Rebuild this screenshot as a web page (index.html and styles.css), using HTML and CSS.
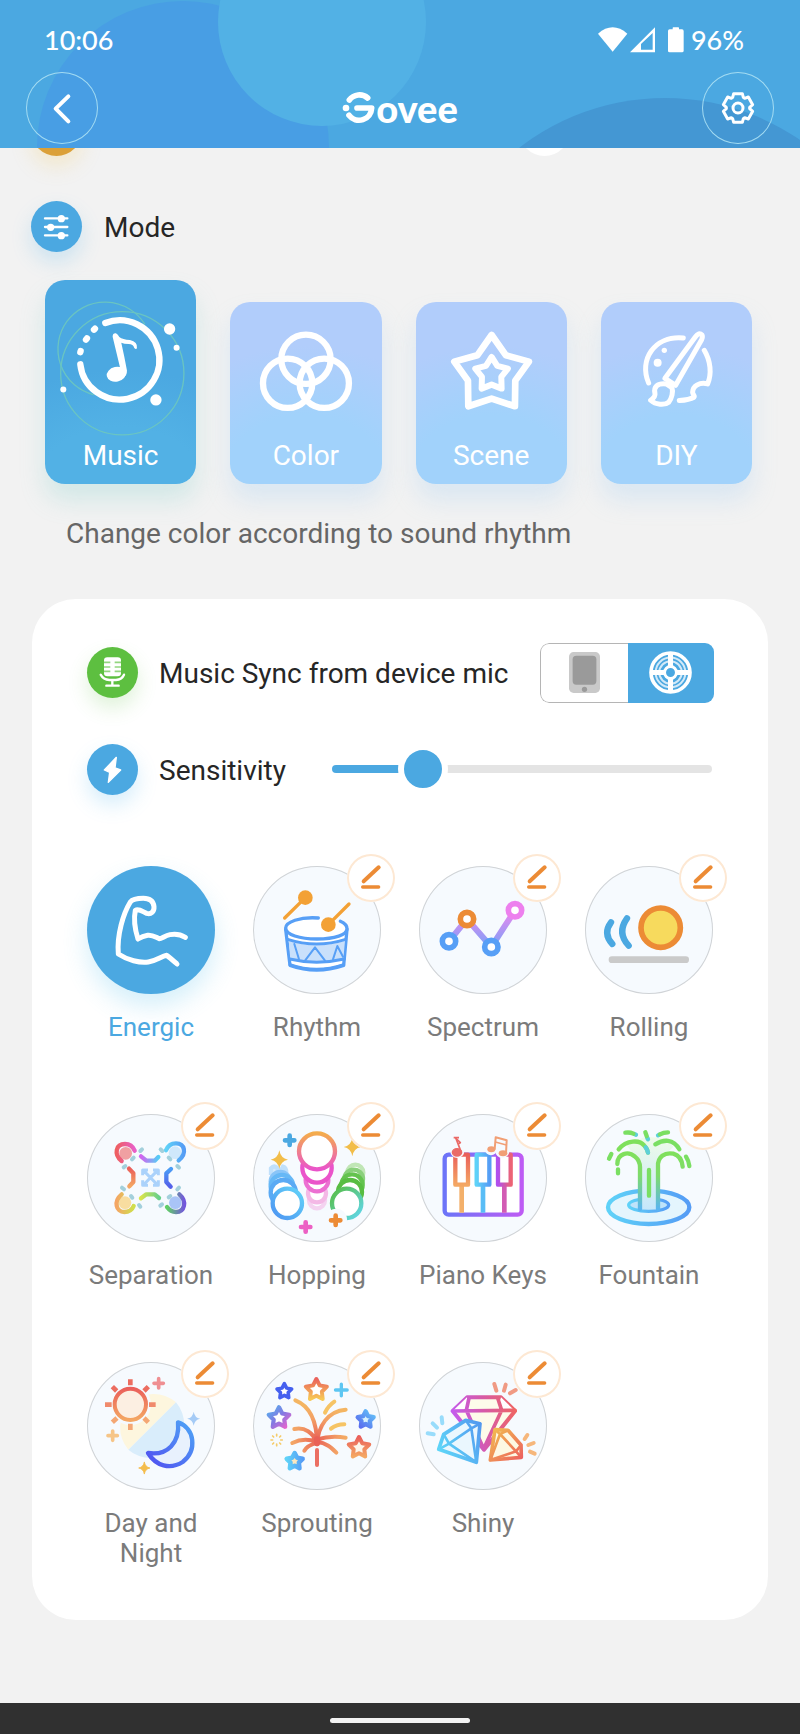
FILE: index.html
```html
<!DOCTYPE html>
<html lang="en">
<head>
<meta charset="utf-8">
<meta name="viewport" content="width=device-width, initial-scale=1">
<title>Govee</title>
<link rel="stylesheet" href="styles.css">
</head>
<body>
<svg class="defs" width="0" height="0" aria-hidden="true">
  <defs>
    <symbol id="edit" viewBox="833 42 144 144">
      <path d="M883 124L928 82" stroke="#ec8b35" stroke-width="12" stroke-linecap="round"/>
      <path d="M880 141H928" stroke="#ec8b35" stroke-width="10" stroke-linecap="round"/>
    </symbol>
    <path id="star" d="M0-50L15-21L48-15L25 8L29 41L0 26L-29 41L-25 8L-48-15L-15-21Z"/>
    <path id="spark" d="M0-28Q4-4 26 0Q4 4 0 28Q-4 4-26 0Q-4-4 0-28Z"/>
    <path id="plus" d="M0-14V14M-14 0H14"/>
    <linearGradient id="g-line" x1="0" y1="0" x2="0" y2="1"><stop offset="0" stop-color="#ee86ee"/><stop offset="1" stop-color="#7aa2f8"/></linearGradient>
    <linearGradient id="g-red-pink"><stop offset="0" stop-color="#ee5f62"/><stop offset="1" stop-color="#e85fc8"/></linearGradient>
    <linearGradient id="g-cyan-blue"><stop offset="0" stop-color="#5fd2f8"/><stop offset="1" stop-color="#559cf5"/></linearGradient>
    <linearGradient id="g-orange-lime"><stop offset="0" stop-color="#f4a664"/><stop offset="1" stop-color="#d0df4c"/></linearGradient>
    <linearGradient id="g-green-violet"><stop offset="0" stop-color="#60cf65"/><stop offset="1" stop-color="#7357dc"/></linearGradient>
    <linearGradient id="g-violet-cyan"><stop offset="0" stop-color="#d264ef"/><stop offset="1" stop-color="#55cdf6"/></linearGradient>
    <linearGradient id="g-red-orange-v" x1="0" y1="0" x2="0" y2="1"><stop offset="0" stop-color="#ea605b"/><stop offset="1" stop-color="#f4a763"/></linearGradient>
    <linearGradient id="g-blue-v" x1="0" y1="0" x2="0" y2="1"><stop offset="0" stop-color="#4a9df6"/><stop offset="1" stop-color="#5560e9"/></linearGradient>
    <linearGradient id="g-lime-green"><stop offset="0" stop-color="#d8e34b"/><stop offset="1" stop-color="#67d18b"/></linearGradient>
    <linearGradient id="g-orange-pink-v" x1="0" y1="0" x2="0" y2="1"><stop offset="0" stop-color="#f4ac4c"/><stop offset="1" stop-color="#ea54ca"/></linearGradient>
    <linearGradient id="g-cyan-blue-d" x1="1" y1="0" x2="0" y2="1"><stop offset="0" stop-color="#62d3f8"/><stop offset="1" stop-color="#4d94f2"/></linearGradient>
    <linearGradient id="g-star-blue" x1="1" y1="0" x2="0" y2="1"><stop offset="0" stop-color="#62c3f8"/><stop offset="1" stop-color="#5a68ee"/></linearGradient>
    <linearGradient id="g-green-cyan" x1="0" y1="0" x2="1" y2="1"><stop offset="0" stop-color="#58bd42"/><stop offset="1" stop-color="#5fd7ee"/></linearGradient>
    <linearGradient id="g-purple"><stop offset="0" stop-color="#6c74f8"/><stop offset="1" stop-color="#bd5cf4"/></linearGradient>
    <linearGradient id="g-purple-red"><stop offset="0" stop-color="#b04fee"/><stop offset="1" stop-color="#ec6375"/></linearGradient>
    <linearGradient id="g-fountain" x1="0" y1="0" x2="0" y2="1"><stop offset="0" stop-color="#7fe05c"/><stop offset=".4" stop-color="#7fdb6b"/><stop offset="1" stop-color="#59b5f0"/></linearGradient>
    <linearGradient id="g-water" x1="0" y1="0" x2="0" y2="1"><stop offset="0" stop-color="#effbe8"/><stop offset="1" stop-color="#c5e7fb"/></linearGradient>
    <linearGradient id="g-moon" x1="0" y1="1" x2="1" y2="0"><stop offset="0" stop-color="#504ff0"/><stop offset="1" stop-color="#4ea4f6"/></linearGradient>
    <linearGradient id="g-star-violet" x1="0" y1="0" x2="1" y2="1"><stop offset="0" stop-color="#55b1ed"/><stop offset=".5" stop-color="#8379e2"/><stop offset="1" stop-color="#f064cc"/></linearGradient>
    <linearGradient id="g-red-yellow-v" x1="0" y1="0" x2="0" y2="1"><stop offset="0" stop-color="#ea625c"/><stop offset="1" stop-color="#f7c956"/></linearGradient>
    <radialGradient id="g-burst" gradientUnits="userSpaceOnUse" cx="742" cy="302" r="110"><stop offset="0" stop-color="#e96157"/><stop offset=".6" stop-color="#f3a165"/><stop offset="1" stop-color="#f4b562"/></radialGradient>
    <linearGradient id="g-gem" gradientUnits="userSpaceOnUse" x1="155" y1="230" x2="350" y2="200"><stop offset="0" stop-color="#c45bf0"/><stop offset=".5" stop-color="#d65aa8"/><stop offset="1" stop-color="#f06560"/></linearGradient>
    <linearGradient id="g-gem-small" gradientUnits="userSpaceOnUse" x1="275" y1="270" x2="365" y2="360"><stop offset="0" stop-color="#f2bd4f"/><stop offset="1" stop-color="#ec615f"/></linearGradient>
    <linearGradient id="g-gem-blue" gradientUnits="userSpaceOnUse" x1="115" y1="330" x2="245" y2="260"><stop offset="0" stop-color="#5fd6f8"/><stop offset="1" stop-color="#5299ef"/></linearGradient>
  </defs>
</svg>

<header class="header">
  <svg class="header-art" viewBox="0 0 800 148" preserveAspectRatio="xMidYMin slice" aria-hidden="true">
    <circle cx="183" cy="147" r="146" fill="#489ee4"/>
    <circle cx="322" cy="22" r="104" fill="#52b1e5"/>
    <circle cx="665" cy="336" r="238" fill="#4497d3"/>
  </svg>
  <div class="status">
    <time class="clock">10:06</time>
    <div class="signals">
      <svg class="signal-icons" viewBox="594 80 264 84" fill="#fff" aria-hidden="true">
        <path d="M597 103Q641 65 685 103L641 157Z"/>
        <path fill-rule="evenodd" d="M693 159L768 84V159ZM726 134V151H761V101Z"/>
        <rect x="807" y="90" width="47" height="69" rx="5"/><rect x="821" y="84" width="19" height="10" rx="2"/>
      </svg>
      <span>96%</span>
    </div>
  </div>
  <div class="toolbar">
    <button class="round-button" type="button" aria-label="Back">
      <svg viewBox="76 216 216 216" fill="none" stroke="#fff" stroke-width="12" stroke-linecap="round" stroke-linejoin="round"><path d="M203 289L165 326L203 364"/></svg>
    </button>
    <h1 class="logo" aria-label="Govee">
      <svg class="logo-mark" viewBox="1024 272 102 102" fill="none" stroke="#fff" stroke-width="17" stroke-linecap="round" aria-hidden="true">
        <path d="M1046 299A38 38 0 0 1 1101 293M1045 345A38 38 0 0 0 1113 323H1069" stroke-linejoin="round"/><circle cx="1036" cy="323" r="10" fill="#fff" stroke="none"/>
      </svg>
      <span>ovee</span>
    </h1>
    <button class="round-button" type="button" aria-label="Settings">
      <svg viewBox="-108 -108 216 216" fill="none" stroke="#fff" stroke-width="9" stroke-linejoin="round"><path d="M-13-43H13L16-32L20-29L31-33L44-10L35-2V2L44 10L31 33L20 29L16 32L13 43H-13L-16 32L-20 29L-31 33L-44 10L-35 2V-2L-44-10L-31-33L-20-29L-16-32Z"/><circle r="15"/></svg>
    </button>
  </div>
</header>

<main class="main">
  <div class="scrolled-row" aria-hidden="true"><span class="dot dot-amber"></span><span class="dot dot-white"></span></div>

  <h2 class="mode-title">
    <span class="badge badge-blue">
      <svg viewBox="94 602 153 153" stroke="#fff" stroke-width="7" stroke-linecap="round" fill="#fff" aria-hidden="true"><path d="M136 654H203M136 680H203M136 705H203"/><g stroke="none"><circle cx="185" cy="655" r="11"/><circle cx="153" cy="681" r="11"/><circle cx="185" cy="706" r="11"/></g></svg>
    </span>
    <span class="label">Mode</span>
  </h2>

  <div class="tabs">
    <button class="tab tab-active" type="button" aria-pressed="true">
      <svg viewBox="77 58 454 477" fill="none" stroke-linecap="round" aria-hidden="true">
        <g stroke="#6fc9bd" stroke-width="4" opacity=".85"><path d="M376 190A141 141 0 1 0 222 402"/><circle cx="309" cy="338" r="185"/></g>
        <path d="M258 187A119 119 0 1 1 183 311" stroke="#fff" stroke-width="19"/>
        <path d="M224 207L227 204M200 237L203 233M183 275L184 271" stroke="#fff" stroke-width="19"/>
        <g fill="#fff"><circle cx="451" cy="205" r="17"/><circle cx="472" cy="261" r="9"/><circle cx="132" cy="387" r="9"/><circle cx="410" cy="418" r="17"/>
        <ellipse cx="291" cy="341" rx="29" ry="22" transform="rotate(-12 291 341)"/>
        <path d="M280 228Q280 217 290 218Q296 222 300 229Q310 237 332 238Q356 243 353 263Q350 268 345 262Q342 250 328 250Q314 250 306 246Q316 290 323 330Q324 348 308 354L302 320Z"/></g>
      </svg>
      <span>Music</span>
    </button>
    <button class="tab" type="button" aria-pressed="false">
      <svg viewBox="631 123 454 411" fill="none" stroke="#fff" stroke-width="19" aria-hidden="true"><circle cx="859" cy="295" r="74"/><circle cx="804" cy="367" r="74"/><circle cx="914" cy="367" r="74"/></svg>
      <span>Color</span>
    </button>
    <button class="tab" type="button" aria-pressed="false">
      <svg viewBox="47 123 454 411" fill="none" stroke="#fff" stroke-width="20" stroke-linejoin="round" aria-hidden="true"><path d="M274 222L317 283L386 302L345 359L344 436L274 413L204 436L203 359L162 302L231 283Z"/><path stroke-width="18" d="M274 288L291 315L323 323L303 348L304 383L274 371L244 383L245 348L225 323L257 315Z"/></svg>
      <span>Scene</span>
    </button>
    <button class="tab" type="button" aria-pressed="false">
      <svg viewBox="601 123 454 411" fill="none" stroke="#fff" stroke-width="15" stroke-linecap="round" stroke-linejoin="round" aria-hidden="true">
        <path d="M744 366C714 298 760 223 848 231M911 268C930 300 934 338 921 369C898 362 876 375 876 394C876 402 884 404 880 409C868 416 850 418 836 419"/>
        <path d="M793 352L884 228Q895 212 904 222Q907 228 903 236L825 373Z"/>
        <path d="M797 369C770 366 758 378 763 398C765 408 756 414 750 418C765 432 792 434 804 424C814 412 818 392 814 380Z"/>
        <g fill="#fff" stroke="none"><circle cx="791" cy="268" r="8"/><circle cx="771" cy="305" r="12"/></g>
      </svg>
      <span>DIY</span>
    </button>
  </div>
  <p class="hint">Change color according to sound rhythm</p>

  <section class="card">
    <div class="setting">
      <span class="badge badge-green">
        <svg viewBox="201 203 153 153" aria-hidden="true"><rect x="252" y="234" width="51" height="57" rx="10" fill="#fff"/><path d="M252 249H271M252 263H271M252 276H271M284 249H303M284 263H303M284 276H303" stroke="#93d680" stroke-width="5"/><path d="M242 286Q250 301 268 302H288Q306 300 312 286M277 302V319M259 319H296" fill="none" stroke="#fff" stroke-width="7" stroke-linecap="round"/></svg>
      </span>
      <span class="label">Music Sync from device mic</span>
      <div class="segment" role="group" aria-label="Microphone source">
        <button class="segment-item" type="button" aria-label="Phone microphone" aria-pressed="false">
          <svg class="phone-icon" viewBox="503 218 94 124" aria-hidden="true"><rect x="503" y="218" width="94" height="124" rx="14" fill="#c9c9c9"/><rect x="514" y="229" width="72" height="88" rx="11" fill="#9a9a9a"/><circle cx="550" cy="331" r="8" fill="#9a9a9a"/></svg>
        </button>
        <button class="segment-item segment-active" type="button" aria-label="Device microphone" aria-pressed="true">
          <svg class="speaker-icon" viewBox="-65 -65 130 130" fill="none" stroke="#fff" aria-hidden="true"><circle r="59" stroke-width="11"/><circle r="45" stroke-width="6" opacity=".75"/><circle r="34" stroke-width="6" opacity=".75"/><path d="M0-58V58M-58 0H58" stroke-width="15"/><circle r="18" fill="#4ba8e1" stroke-width="9"/></svg>
        </button>
      </div>
    </div>
    <div class="setting">
      <span class="badge badge-blue">
        <svg viewBox="201 491 153 153" fill="#fff" stroke="#fff" stroke-width="4" stroke-linejoin="round" aria-hidden="true"><path d="M289 531L253 569L269 576L265 606L302 569L285 563Z"/></svg>
      </span>
      <label class="label" for="sensitivity">Sensitivity</label>
      <input class="slider" id="sensitivity" type="range" min="0" max="100" value="20">
    </div>

    <ul class="effects">
      <li class="effect">
        <button class="effect-button effect-active" type="button" aria-pressed="true">
          <svg viewBox="51 78 384 384" fill="none" stroke="#fff" stroke-width="15" stroke-linecap="round" stroke-linejoin="round" aria-hidden="true"><path d="M346 292C333 284 316 281 300 284C285 287 275 296 268 296C258 292 247 284 233 286C220 288 212 292 204 297C196 272 190 240 196 211C206 205 218 215 230 220C243 224 253 215 252 200C250 183 238 175 220 175C200 175 188 177 181 186C160 220 140 285 145 342C172 360 210 370 235 366C260 362 275 348 290 346C300 353 312 364 321 372"/></svg>
          <span>Energic</span>
        </button>
      </li>
      <li class="effect">
        <button class="effect-button" type="button" aria-pressed="false">
          <svg viewBox="550 78 384 384" fill="none" stroke="#579ff6" stroke-width="10" stroke-linecap="round" stroke-linejoin="round" aria-hidden="true">
            <path d="M648 268L661 376Q740 404 822 376L832 268Z" fill="#fff"/>
            <path d="M657 302Q740 330 826 302L821 358Q740 380 662 358Z" fill="#c9e0fb" stroke="none"/>
            <path d="M746 234C690 230 648 246 648 264C648 284 690 297 742 297C796 297 832 284 832 266C832 256 826 250 812 244" fill="#fff" stroke="none"/>
            <path d="M746 234C690 230 648 246 648 264C648 284 690 297 742 297C796 297 832 284 832 266C832 256 826 250 812 244"/>
            <path d="M654 298Q740 326 828 298M660 357Q740 376 824 357M661 374Q740 402 822 374" stroke-width="9"/>
            <path d="M674 312L688 358M706 362L736 322L766 362M790 358L803 318L820 350" stroke-width="6"/>
            <g stroke="#f3a135"><path d="M645 234L707 173M776 254L838 192"/><g stroke="none" fill="#f3a135"><circle cx="707" cy="173" r="22"/><circle cx="776" cy="254" r="22"/></g></g>
          </svg>
          <span>Rhythm</span>
        </button>
        <button class="edit-button" type="button" aria-label="Edit Rhythm"><svg><use href="#edit"/></svg></button>
      </li>
      <li class="effect">
        <button class="effect-button" type="button" aria-pressed="false">
          <svg viewBox="58 78 384 384" fill="none" aria-hidden="true"><path d="M148 304L202 237L275 321L346 211" stroke="url(#g-line)" stroke-width="18"/><g fill="#fff" stroke-width="17"><circle cx="148" cy="304" r="20" stroke="#579ff6"/><circle cx="202" cy="237" r="20" stroke="#ec8b35"/><circle cx="275" cy="321" r="20" stroke="#579ff6"/><circle cx="346" cy="211" r="20" stroke="#ed80ee"/></g></svg>
          <span>Spectrum</span>
        </button>
        <button class="edit-button" type="button" aria-label="Edit Spectrum"><svg><use href="#edit"/></svg></button>
      </li>
      <li class="effect">
        <button class="effect-button" type="button" aria-pressed="false">
          <svg viewBox="555 78 384 384" fill="none" stroke-linecap="round" aria-hidden="true"><path d="M633 247Q608 280 637 312M681 235Q650 278 686 317" stroke="#4ba8e1" stroke-width="19"/><circle cx="782" cy="263" r="59" fill="#f7da5d" stroke="#ec8b35" stroke-width="17"/><path d="M636 359H857" stroke="#cacaca" stroke-width="20"/></svg>
          <span>Rolling</span>
        </button>
        <button class="edit-button" type="button" aria-label="Edit Rolling"><svg><use href="#edit"/></svg></button>
      </li>
      <li class="effect">
        <button class="effect-button" type="button" aria-pressed="false">
          <svg viewBox="51 72 384 384" fill="none" stroke-width="13" stroke-linecap="round" stroke-linejoin="round" aria-hidden="true">
            <g stroke="none"><circle cx="167" cy="190" r="19" fill="#f0a0a2"/><circle cx="315" cy="188" r="19" fill="#cfe8fb"/><circle cx="165" cy="338" r="19" fill="#f8dda0"/><circle cx="316" cy="338" r="19" fill="#a9c4f7"/></g>
            <path d="M155 213C130 192 138 162 165 162C180 162 189 170 194 182" stroke="url(#g-red-pink)"/>
            <path d="M326 211C352 190 344 160 318 160C303 160 293 168 288 181" stroke="url(#g-cyan-blue)"/>
            <path d="M155 313C130 334 138 366 163 366C178 366 187 358 191 348" stroke="url(#g-orange-lime)"/>
            <path d="M328 313C352 334 344 366 318 366C304 366 296 358 291 351" stroke="url(#g-green-violet)"/>
            <g stroke-width="13"><path d="M213 199L229 212H254L265 201" stroke="url(#g-violet-cyan)"/><path d="M303 237L289 250V276L302 290" stroke="url(#g-blue-v)"/><path d="M213 325L229 313H254L267 324" stroke="url(#g-lime-green)"/><path d="M177 236L190 250V276L178 289" stroke="url(#g-red-orange-v)"/></g>
            <path d="M211 183L216 178M186 208L191 203M161 232L166 228M272 178L277 183M296 203L301 208M322 228L327 233M156 293L162 298M183 318L187 323M207 345L211 350M322 298L327 293M296 322L301 318M271 347L276 343" stroke="#a3d0dc" stroke-width="12"/>
            <path d="M223 244L260 282M260 244L223 282M218 256V240H234M249 240H265V256M265 271V286H249M234 286H218V271" stroke="#abd2fb" stroke-width="9" stroke-linecap="butt"/>
          </svg>
          <span>Separation</span>
        </button>
        <button class="edit-button" type="button" aria-label="Edit Separation"><svg><use href="#edit"/></svg></button>
      </li>
      <li class="effect">
        <button class="effect-button" type="button" aria-pressed="false">
          <svg viewBox="550 72 384 384" fill="#fff" stroke-width="13" aria-hidden="true">
            <g stroke="#f4b9e6"><circle cx="742" cy="331" r="24" opacity=".6"/><circle cx="742" cy="310" r="27"/></g>
            <circle cx="742" cy="270" r="34" stroke="#ec70d2"/><circle cx="742" cy="234" r="44" stroke="#ea54ca"/><circle cx="742" cy="184" r="54" stroke="url(#g-orange-pink-v)"/>
            <g stroke="#c0e0fb"><path d="M604 255V235Q612 225 622 233L630 250L640 230Q650 232 650 250" fill="#d6eafb"/></g>
            <circle cx="632" cy="275" r="29" stroke="#8ac5f8"/><circle cx="637" cy="289" r="34" stroke="#66b8f6"/><circle cx="641" cy="308" r="38" stroke="#5aaaf4"/><circle cx="653" cy="340" r="44" stroke="url(#g-cyan-blue-d)"/>
            <circle cx="857" cy="248" r="24" stroke="#c0e6b6"/><circle cx="852" cy="267" r="28" stroke="#8ad07c"/><circle cx="847" cy="285" r="32" stroke="#64c34f"/><circle cx="841" cy="306" r="36" stroke="#58bd42"/><circle cx="831" cy="340" r="44" stroke="url(#g-green-cyan)"/>
            <circle cx="800" cy="388" r="32" fill="#f6fafe" stroke="none"/>
            <g stroke-width="14" stroke-linecap="round"><use href="#plus" x="660" y="151" stroke="#4ba8e1"/><use href="#plus" x="798" y="391" stroke="#ec8b35"/><use href="#plus" x="708" y="411" stroke="#ec60c4"/></g>
            <g stroke="none" fill="#f2bd49"><use href="#spark" x="629" y="209"/><use href="#spark" x="848" y="171"/></g>
          </svg>
          <span>Hopping</span>
        </button>
        <button class="edit-button" type="button" aria-label="Edit Hopping"><svg><use href="#edit"/></svg></button>
      </li>
      <li class="effect">
        <button class="effect-button" type="button" aria-pressed="false">
          <svg viewBox="58 72 384 384" fill="none" stroke-width="13" stroke-linejoin="round" aria-hidden="true">
            <rect x="135" y="194" width="231" height="180" rx="12" fill="#fff" stroke="url(#g-purple)"/>
            <path d="M186 284V368" stroke="#f3b06b" stroke-width="14"/><path d="M250 284V368" stroke="#59bdf6" stroke-width="14"/><path d="M314 284V368" stroke="#d25bb4" stroke-width="14"/>
            <rect x="167" y="194" width="38" height="90" fill="#fff" stroke="url(#g-red-orange-v)"/><rect x="231" y="194" width="38" height="90" fill="#fff" stroke="url(#g-cyan-blue)"/><rect x="295" y="194" width="38" height="90" fill="#fff" stroke="url(#g-purple-red)"/>
            <circle cx="173" cy="183" r="21" fill="#f6fafe"/><circle cx="274" cy="178" r="18" fill="#f6fafe"/><circle cx="308" cy="183" r="21" fill="#f6fafe"/>
            <g fill="#ea6a67" stroke="#ea6a67" stroke-width="4"><ellipse cx="172" cy="187" rx="14" ry="11"/><path d="M184 185L168 143M162 143H178" fill="none" stroke-width="5"/><path d="M168 144L182 158L176 161" fill="none" stroke-width="5"/></g>
            <g fill="#f19f75" stroke="#f19f75"><ellipse cx="275" cy="178" rx="12" ry="9" stroke="none"/><ellipse cx="310" cy="190" rx="13" ry="9" stroke="none"/><path d="M285 178L288 142L321 151L319 190" fill="none" stroke-width="6"/><path d="M287 156L320 165" stroke-width="4"/></g>
          </svg>
          <span>Piano Keys</span>
        </button>
        <button class="edit-button" type="button" aria-label="Edit Piano Keys"><svg><use href="#edit"/></svg></button>
      </li>
      <li class="effect">
        <button class="effect-button" type="button" aria-pressed="false">
          <svg viewBox="555 72 384 384" fill="none" stroke-width="13" stroke-linecap="round" aria-hidden="true">
            <ellipse cx="746" cy="352" rx="122" ry="50" fill="#e4f5fd" stroke="url(#g-cyan-blue)"/>
            <ellipse cx="746" cy="345" rx="60" ry="19" fill="#bfe3fa" stroke="url(#g-cyan-blue)" stroke-width="10"/>
            <path d="M718 358V220L680 165L735 140L800 145L820 170L774 215V358Z" fill="url(#g-water)"/>
            <path d="M652 222C652 190 685 182 705 200C716 209 720 218 720 232V357M774 357V230C772 200 795 186 820 191C838 196 846 210 848 230" stroke="url(#g-fountain)"/>
            <path d="M656 178C680 148 720 150 732 166Q742 176 744 188" stroke="#7fe05c"/><path d="M737 172Q742 178 744 188M741 142L744 148M774 136L778 134M703 132L708 134" stroke="#5dd0d8"/>
            <path d="M766 163C790 148 820 145 838 178M747 240V317M676 128Q690 126 700 131M736 127L740 138M780 133Q790 127 804 127M627 206L634 192M654 238V250M858 200Q866 212 868 228" stroke="#7adf62"/>
          </svg>
          <span>Fountain</span>
        </button>
        <button class="edit-button" type="button" aria-label="Edit Fountain"><svg><use href="#edit"/></svg></button>
      </li>
      <li class="effect">
        <button class="effect-button" type="button" aria-pressed="false">
          <svg viewBox="51 68 384 384" fill="none" stroke-linejoin="round" aria-hidden="true">
            <path d="M175 331A101 101 0 0 1 318 189Z" fill="#fdf6de"/><path d="M175 331A101 101 0 0 0 318 189Z" fill="#d9edfb"/>
            <circle cx="181" cy="195" r="62" fill="#f6fafe"/>
            <circle cx="181" cy="195" r="47" fill="#fcefe2" stroke="url(#g-red-orange-v)" stroke-width="12"/>
            <g stroke-width="14"><path d="M181 120V138M127 142L140 155M235 142L222 155" stroke="#ec6d60"/><path d="M105 196H125M237 196H257" stroke="#f08a6c"/><path d="M127 249L141 236M235 249L222 236M181 253V272" stroke="#f4a774"/></g>
            <path d="M324 249C375 266 382 334 338 368C300 392 258 380 234 341C292 350 330 310 324 249Z" fill="#e8f1fd" stroke="url(#g-moon)" stroke-width="13"/>
            <g stroke-width="11" stroke-linecap="round"><use href="#plus" x="266" y="132" stroke="#ef8f92"/><use href="#plus" x="128" y="289" stroke="#f6c588"/></g>
            <use href="#spark" transform="translate(371 238) scale(.75)" fill="#a5cbf6"/><use href="#spark" transform="translate(223 386) scale(.65)" fill="#f4bd4d" stroke="#f4bd4d" stroke-width="4"/>
          </svg>
          <span>Day and Night</span>
        </button>
        <button class="edit-button" type="button" aria-label="Edit Day and Night"><svg><use href="#edit"/></svg></button>
      </li>
      <li class="effect">
        <button class="effect-button" type="button" aria-pressed="false">
          <svg viewBox="550 68 384 384" fill="none" stroke-linecap="round" stroke-linejoin="round" aria-hidden="true">
            <path d="M742 315C742 240 720 200 677 183M742 315C745 260 775 215 828 211M742 310C730 280 705 262 674 269M742 300C775 290 800 290 828 295M742 308C715 298 690 300 668 311M742 310C725 315 712 320 704 334M742 308C770 310 785 325 800 340" stroke="url(#g-burst)" stroke-width="12"/>
            <path d="M742 300V312" stroke="#e96157" stroke-width="18"/><path d="M742 332V377" stroke="#eb6f63" stroke-width="12"/>
            <path d="M766 220Q775 200 794 187M784 268Q800 255 824 255" stroke="#f6c465" stroke-width="12"/>
            <use href="#star" transform="translate(740 152) scale(.66)" stroke="url(#g-red-yellow-v)" stroke-width="18" fill="#fff"/>
            <use href="#star" transform="translate(644 156) scale(.46)" stroke="#4560ef" stroke-width="23" fill="#fff"/>
            <use href="#star" transform="translate(628 236) scale(.64)" stroke="url(#g-star-violet)" stroke-width="20" fill="#fff"/>
            <use href="#star" transform="translate(888 241) scale(.5)" stroke="url(#g-star-blue)" stroke-width="26" fill="#d9f2fd"/>
            <use href="#star" transform="translate(868 325) scale(.64)" stroke="url(#g-red-orange-v)" stroke-width="19" fill="#fdf5ea"/>
            <use href="#star" transform="translate(675 366) scale(.5)" stroke="url(#g-cyan-blue)" stroke-width="27" fill="#fbe7bf"/>
            <use href="#plus" transform="translate(815 152) scale(1.25)" stroke="#5dc6f2" stroke-width="8"/>
            <path d="M621 285V290M621 314V319M604 302H609M633 302H638M609 290L612 293M630 311L633 314M609 314L612 311M630 293L633 290" stroke="#f5cc6b" stroke-width="5"/>
          </svg>
          <span>Sprouting</span>
        </button>
        <button class="edit-button" type="button" aria-label="Edit Sprouting"><svg><use href="#edit"/></svg></button>
      </li>
      <li class="effect">
        <button class="effect-button" type="button" aria-pressed="false">
          <svg viewBox="58 68 384 384" fill="none" stroke-width="11" stroke-linecap="round" stroke-linejoin="round" aria-hidden="true">
            <path d="M159 215L202 174H304L346 215L253 331Z" fill="#fdfbea" stroke="url(#g-gem)" stroke-width="12"/>
            <path d="M159 215L202 174L212 212ZM346 215L304 174L294 212Z" fill="#fff"/>
            <path d="M160 215L346 213M208 176L200 213L252 328L306 213L294 176" stroke="url(#g-gem)"/>
            <path d="M117 330L132 285L198 243L241 253L230 369Z" fill="#eaf7fe" stroke="url(#g-gem-blue)"/>
            <path d="M132 285L148 313L117 330M148 313L215 267L198 243M215 267L241 253M148 313L230 369L215 267" stroke="url(#g-gem-blue)" stroke-width="8"/>
            <path d="M286 271L325 273L364 317L365 354L272 362Z" fill="#fdf8e4" stroke="url(#g-gem-small)"/>
            <path d="M286 271L301 284L325 273M301 284L349 336L364 317M349 336L365 354M301 284L272 362L349 336" stroke="url(#g-gem-small)" stroke-width="8"/>
            <g stroke-width="12"><path d="M284 134L290 154M318 136L313 154M331 162L348 152" stroke="#f09a84"/><path d="M84 282L102 285M99 252L112 265M126 234L128 252" stroke="#98dcfb"/><path d="M375 299L383 287M386 317L402 311M391 337L405 343" stroke="#f6b77c"/></g>
          </svg>
          <span>Shiny</span>
        </button>
        <button class="edit-button" type="button" aria-label="Edit Shiny"><svg><use href="#edit"/></svg></button>
      </li>
    </ul>
  </section>
</main>
<footer class="nav-bar"><span class="nav-pill"></span></footer>
</body>
</html>
```
FILE: styles.css
```css
* { box-sizing: border-box; }

body {
  margin: 0;
  min-height: 100vh;
  display: flex;
  flex-direction: column;
  background: #f2f2f2;
  color: #262626;
  font-family: Roboto, "Liberation Sans", sans-serif;
  font-size: 28px;
  line-height: 34px;
}

button {
  margin: 0;
  padding: 0;
  border: 0;
  background: none;
  color: inherit;
  font: inherit;
  cursor: pointer;
}

svg { display: block; }
.defs { position: absolute; }

/* Header */
.header {
  position: relative;
  z-index: 1;
  background: #4ba8e1;
  color: #fff;
  padding-bottom: 4px;
}
.header-art {
  position: absolute;
  inset: 0;
  width: 100%;
  height: 100%;
}
.status {
  position: relative;
  display: flex;
  justify-content: space-between;
  align-items: center;
  height: 72px;
  padding: 8px 56px 0 44px;
  font-family: Lato, Roboto, sans-serif;
  font-size: 27px;
  font-weight: 500;
  line-height: 32px;
}
.signals {
  display: flex;
  align-items: center;
  gap: 6px;
}
.signal-icons { width: 88px; height: 28px; }
.toolbar {
  position: relative;
  display: flex;
  justify-content: space-between;
  align-items: center;
  padding: 0 26px;
}
.round-button {
  width: 72px;
  height: 72px;
  border-radius: 50%;
  box-shadow: inset 0 0 0 1px #a4dcf2;
}
.logo {
  display: flex;
  align-items: center;
  margin: 0;
  font-family: Lato, Roboto, sans-serif;
  font-size: 38px;
  font-weight: 900;
  line-height: 40px;
}
.logo-mark { width: 34px; height: 34px; }

/* Page */
.main { padding-bottom: 82px; }
.scrolled-row {
  display: flex;
  align-items: flex-end;
  justify-content: space-between;
  height: 8px;
  padding: 0 230px 0 31px;
}
.dot {
  width: 51px;
  height: 51px;
  border-radius: 50%;
}
.dot-amber {
  background: #dba038;
  box-shadow: 0 10px 20px rgba(247, 205, 90, .25);
}
.dot-white { background: #fff; }

.badge {
  flex: none;
  width: 51px;
  height: 51px;
  border-radius: 50%;
}
.badge-blue {
  background: #4ba8e1;
  box-shadow: 0 10px 20px rgba(75, 178, 235, .22);
}
.badge-green {
  background: #5dbf40;
  box-shadow: 0 10px 20px rgba(93, 191, 64, .2);
}
.label { padding-top: 3px; }
.mode-title {
  display: flex;
  align-items: center;
  gap: 22px;
  margin: 45px 31px 0;
  font-size: 28px;
  font-weight: 400;
}

.tabs {
  display: grid;
  grid-template-columns: repeat(4, 1fr);
  align-items: end;
  gap: 34px;
  margin-top: 28px;
  padding: 0 48px 0 45px;
}
.tab {
  padding-bottom: 11px;
  border-radius: 20px;
  background: radial-gradient(ellipse 110% 76% at 50% 100%, #a1d2fb 50%, #b1cdfb 100%);
  box-shadow: 0 16px 24px rgba(150, 200, 245, .26);
  color: #fff;
}
.tab-active {
  background: radial-gradient(ellipse 110% 56% at 50% 100%, #52b1e5 50%, #4ba8e1 100%);
  box-shadow: 0 16px 24px rgba(120, 205, 200, .26);
}
.tab svg { width: 100%; height: auto; }
.tab span { display: block; }
.hint {
  margin: 33px 66px 0;
  color: #666;
}

/* Settings card */
.card {
  margin: 48px 32px 0;
  padding: 44px 54px 52px 55px;
  border-radius: 44px;
  background: #fff;
}
.setting {
  display: flex;
  align-items: center;
  gap: 21px;
}
.setting + .setting { margin-top: 41px; }
.segment {
  display: flex;
  width: 174px;
  height: 60px;
  margin-left: auto;
  overflow: hidden;
  border-radius: 9px;
}
.segment-item {
  flex: 1;
  display: flex;
  align-items: center;
  justify-content: center;
  border: 1px solid #b5b5b5;
  border-right: 0;
  border-radius: 9px 0 0 9px;
}
.segment-active {
  border: 0;
  border-radius: 0;
  background: #4ba8e1;
}
.phone-icon { width: 31px; height: 41px; }
.speaker-icon { width: 43px; height: 43px; }

.slider {
  flex: 1;
  min-width: 0;
  height: 8px;
  margin: 0 2px 0 25px;
  appearance: none;
  border-radius: 4px;
  background: linear-gradient(to right, #4ba8e1 24%, #e4e4e4 24%);
}
.slider::-webkit-slider-thumb {
  appearance: none;
  width: 50px;
  height: 50px;
  border: 6px solid #fff;
  border-radius: 50%;
  background: #4ba8e1;
}

/* Effects */
.effects {
  display: grid;
  grid-template-columns: repeat(4, minmax(0, 1fr));
  gap: 72px 38px;
  margin: 71px 1px 0 0;
  padding: 0;
  list-style: none;
}
.effect { position: relative; }
.effect-button {
  display: block;
  width: 100%;
  color: #7b7b7b;
  font-size: 26px;
  line-height: 30px;
}
.effect-button svg {
  width: 100%;
  height: auto;
  margin-bottom: 18px;
  border-radius: 50%;
  background: #f6fafe;
  box-shadow: 0 0 0 1px #d0d3d6 inset;
}
.effect-button span { display: block; }
.effect-active { color: #4ba8e1; }
.effect-button.effect-active svg {
  background: #4ba8e1;
  box-shadow: 0 12px 24px rgba(75, 190, 235, .24);
}
.edit-button {
  position: absolute;
  top: -12px;
  right: -14px;
  width: 48px;
  height: 48px;
  border-radius: 50%;
  background: #fff;
  box-shadow: inset 0 0 0 2px #fde8d3;
}
.edit-button svg { width: 48px; height: 48px; }

.nav-bar {
  display: flex;
  justify-content: center;
  align-items: center;
  height: 31px;
  margin-top: auto;
  padding-top: 3px;
  background: #303030;
}
.nav-pill {
  width: 140px;
  height: 5px;
  border-radius: 3px;
  background: #f2f2f2;
}
```
